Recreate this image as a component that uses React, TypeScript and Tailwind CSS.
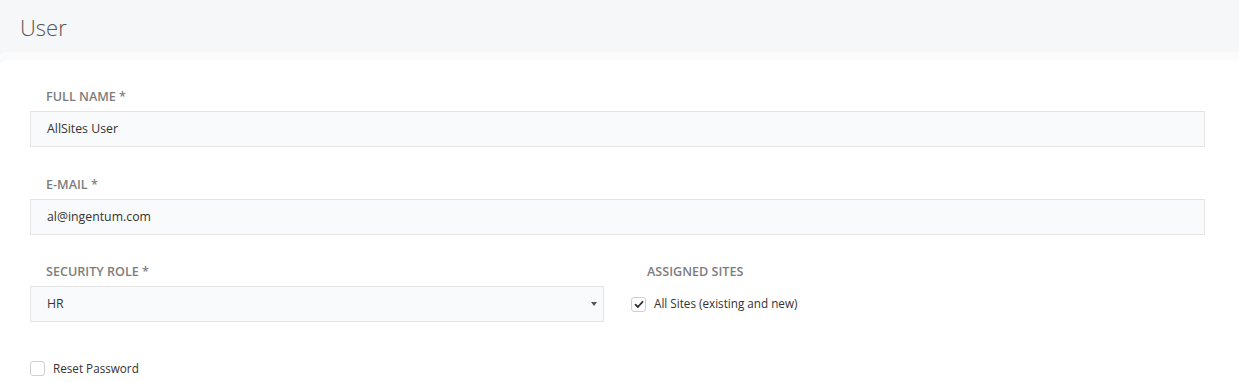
import React from "react";

const font = { fontFamily: '"Open Sans", "Noto Sans", sans-serif' };

function Label({ children }: { children: React.ReactNode }) {
  return (
    <div className="pl-4 h-4 leading-4 text-[12.6px] font-semibold uppercase text-[#7d7d7d] mb-[6px]">
      {children}
    </div>
  );
}

function Field({ label, value }: { label: string; value: string }) {
  return (
    <div>
      <Label>{label}</Label>
      <div className="h-9 flex items-center px-4 bg-[#f9fafb] border border-[#e5e5e5] text-[12.3px] text-[#333]">
        {value}
      </div>
    </div>
  );
}

function Box({ checked }: { checked?: boolean }) {
  return (
    <span className="w-[15px] h-[15px] rounded-[3px] border border-[#cfcfcf] bg-white flex items-center justify-center shrink-0">
      {checked && (
        <svg width="10" height="9" viewBox="0 0 10 9">
          <path d="M1.5 4.6 L3.9 7 L8.5 1.8" fill="none" stroke="#333" strokeWidth="1.8" strokeLinecap="round" strokeLinejoin="round" />
        </svg>
      )}
    </span>
  );
}

export default function App() {
  return (
    <div className="w-[1239px] h-[382px] bg-[#f6f7f9] overflow-hidden flex flex-col" style={font}>
      <div className="h-[52px] shrink-0 pl-5 pt-[11px]">
        <h1 className="text-[22px] font-light leading-[32px] text-[#555]">User</h1>
      </div>
      <div className="flex-1 bg-white rounded-tl-[6px] shadow-[inset_0_8px_0_#fbfbfc] pl-[30px] pr-[34px] pt-[37px]">
        <div className="flex flex-col gap-[30px]">
          <Field label="Full Name *" value="AllSites User" />
          <Field label="E-mail *" value="al@ingentum.com" />
        </div>
        <div className="grid grid-cols-2 gap-[27px] mt-[29px]">
          <div>
            <Label>Security Role *</Label>
            <div className="h-9 flex items-center justify-between pl-4 pr-[6px] bg-[#f9fafb] border border-[#e5e5e5] text-[12.3px] text-[#333]">
              <span>HR</span>
              <svg width="6" height="4" viewBox="0 0 6 4">
                <path d="M0 0 H6 L3 4 Z" fill="#555" />
              </svg>
            </div>
          </div>
          <div>
            <Label>Assigned Sites</Label>
            <div className="h-9 flex items-center gap-2 text-[11.7px] text-[#333]">
              <Box checked />
              <span>All Sites (existing and new)</span>
            </div>
          </div>
        </div>
        <div className="mt-[38px] flex items-center gap-2 text-[11.7px] text-[#333]">
          <Box />
          <span>Reset Password</span>
        </div>
      </div>
    </div>
  );
}
